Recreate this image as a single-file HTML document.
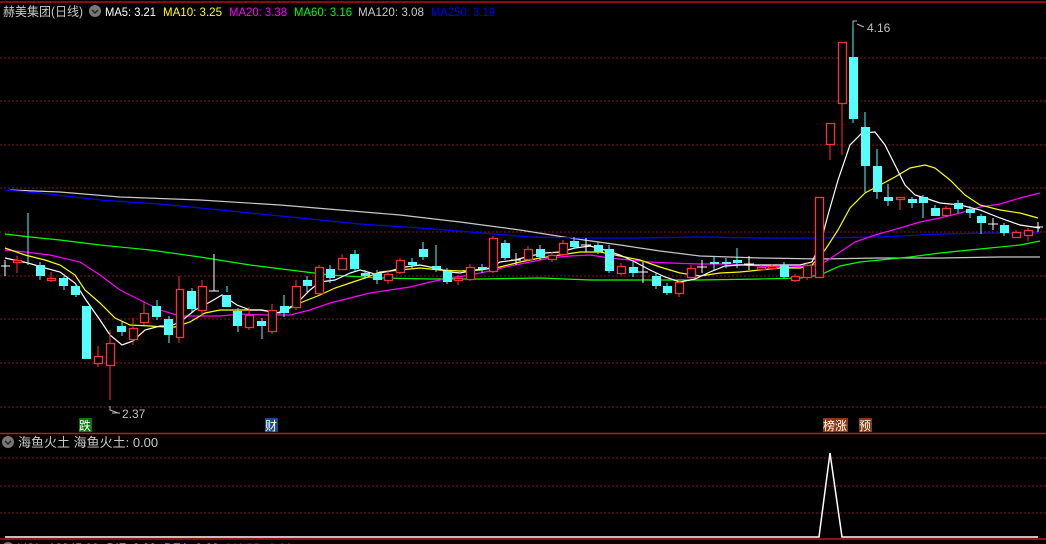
<!DOCTYPE html>
<html><head><meta charset="utf-8"><style>
html,body{margin:0;padding:0;background:#000;width:1046px;height:544px;overflow:hidden}
svg{display:block}
text{font-family:"Liberation Sans","Noto Sans CJK SC",sans-serif}
</style></head><body>
<svg width="1046" height="544" viewBox="0 0 1046 544" xmlns="http://www.w3.org/2000/svg">
<rect width="1046" height="544" fill="#000"/>
<line x1="0" y1="2" x2="1046" y2="2" stroke="#b01010" stroke-width="1.5"/>
<g stroke="#8a1818" stroke-width="1" stroke-dasharray="2,2">
<line x1="0" y1="58" x2="1046" y2="58"/><line x1="0" y1="101" x2="1046" y2="101"/>
<line x1="0" y1="145" x2="1046" y2="145"/><line x1="0" y1="188" x2="1046" y2="188"/>
<line x1="0" y1="232" x2="1046" y2="232"/><line x1="0" y1="276" x2="1046" y2="276"/>
<line x1="0" y1="319" x2="1046" y2="319"/><line x1="0" y1="363" x2="1046" y2="363"/>
<line x1="0" y1="407" x2="1046" y2="407"/>
<line x1="0" y1="458" x2="1046" y2="458"/><line x1="0" y1="486" x2="1046" y2="486"/>
<line x1="0" y1="513" x2="1046" y2="513"/>
</g>
<line x1="0" y1="433.5" x2="1046" y2="433.5" stroke="#c01818" stroke-width="1.5"/>
<line x1="0" y1="539" x2="1046" y2="539" stroke="#c01818" stroke-width="1.5"/>

<g fill="none" stroke-width="1.2">
<polyline stroke="#c8c8c8" points="10,190 60,192 120,197 200,200 280,205 340,210 400,215 460,222 520,230 570,238 620,245 660,251 700,256 760,258 820,259 880,258 940,258 1000,257 1040,257"/>
<polyline stroke="#0000ff" points="5,190 40,193 100,200 160,204 230,211 300,218 360,224 420,228 470,232 530,237 580,238 640,238 700,237 760,238 820,238 880,237 940,234 1000,233 1040,233"/>
<polyline stroke="#00ff00" points="5,234 30,237 60,240 100,245 150,250 200,257 250,265 290,270 330,275 380,278 430,279 480,279 540,278 590,280 640,280 700,280 760,279 800,278 820,275 840,266 860,262 880,260 910,257 940,253 980,249 1020,245 1040,241"/>
<polyline stroke="#ff00ff" points="5,250 25,252 50,255 80,262 100,275 120,290 140,300 160,310 180,316 200,316 220,316 240,314 265,315 290,315 310,310 330,303 350,298 370,293 390,290 410,287 430,282 450,278 470,275 490,271 510,266 530,262 550,258 570,256 590,255 610,258 630,260 650,262 670,263 700,264 730,264 760,266 790,267 810,266 825,262 840,252 855,242 875,235 900,228 920,222 940,218 960,213 980,207 1000,204 1020,198 1040,193"/>
<polyline stroke="#ffff00" points="5,248 25,255 45,260 60,265 75,275 85,290 100,303 115,318 130,325 150,326 165,327 175,327 190,322 205,313 220,310 240,310 260,310 280,313 290,307 300,303 320,295 335,288 350,283 365,278 380,272 400,270 420,268 440,270 460,271 480,270 500,267 520,262 540,258 560,255 580,252 600,252 620,256 640,260 660,267 680,273 700,276 720,273 740,272 760,270 780,268 800,268 812,265 825,250 838,230 850,208 865,193 880,185 895,177 910,168 925,165 935,168 950,180 965,195 980,205 1000,210 1020,213 1038,218"/>
<polyline stroke="#ffffff" points="5,258 28,263 45,268 60,272 75,283 86,300 100,320 110,335 122,345 133,341 145,330 160,326 170,326 180,322 195,310 210,302 222,295 237,305 250,310 262,310 277,313 290,308 300,300 310,290 320,282 335,280 350,273 360,270 375,274 390,271 405,267 420,265 435,268 450,272 460,273 475,270 490,268 500,262 515,260 530,256 545,253 560,252 575,248 590,246 605,250 620,255 635,262 650,270 665,277 680,282 695,279 710,272 725,266 740,265 760,265 780,265 800,265 812,262 820,245 828,215 838,180 850,145 862,133 875,132 885,145 895,165 905,185 915,195 925,198 940,203 960,205 980,210 1000,218 1020,225 1040,228"/>
</g>

<g stroke="#54ffff" stroke-width="1">
<line x1="28" y1="213" x2="28" y2="265"/><line x1="40" y1="262" x2="40" y2="280"/>
<line x1="64" y1="276" x2="64" y2="290"/><line x1="76" y1="284" x2="76" y2="297"/>
<line x1="122" y1="322" x2="122" y2="336"/><line x1="157" y1="300" x2="157" y2="320"/>
<line x1="169" y1="316" x2="169" y2="343"/><line x1="192" y1="288" x2="192" y2="312"/>
<line x1="227" y1="292" x2="227" y2="286"/><line x1="238" y1="308" x2="238" y2="332"/>
<line x1="262" y1="318" x2="262" y2="339"/><line x1="284" y1="295" x2="284" y2="317"/>
<line x1="307" y1="276" x2="307" y2="292"/><line x1="330" y1="265" x2="330" y2="283"/>
<line x1="355" y1="250" x2="355" y2="271"/><line x1="365" y1="270" x2="365" y2="279"/>
<line x1="377" y1="270" x2="377" y2="284"/><line x1="412" y1="258" x2="412" y2="268"/>
<line x1="423" y1="242" x2="423" y2="260"/><line x1="436" y1="245" x2="436" y2="272"/>
<line x1="447" y1="268" x2="447" y2="284"/><line x1="482" y1="264" x2="482" y2="273"/>
<line x1="505" y1="240" x2="505" y2="260"/><line x1="540" y1="245" x2="540" y2="260"/>
<line x1="574" y1="237" x2="574" y2="249"/><line x1="598" y1="242" x2="598" y2="254"/>
<line x1="609" y1="245" x2="609" y2="273"/><line x1="633" y1="262" x2="633" y2="277"/>
<line x1="656" y1="273" x2="656" y2="289"/><line x1="667" y1="283" x2="667" y2="295"/>
<line x1="714" y1="256" x2="714" y2="270"/><line x1="726" y1="258" x2="726" y2="268"/>
<line x1="737" y1="248" x2="737" y2="268"/><line x1="784" y1="262" x2="784" y2="279"/>
<line x1="853" y1="22" x2="853" y2="123"/><line x1="865" y1="112" x2="865" y2="192"/>
<line x1="877" y1="149" x2="877" y2="199"/><line x1="888" y1="184" x2="888" y2="206"/>
<line x1="912" y1="197" x2="912" y2="208"/><line x1="923" y1="195" x2="923" y2="218"/>
<line x1="935" y1="205" x2="935" y2="216"/><line x1="958" y1="200" x2="958" y2="213"/>
<line x1="970" y1="206" x2="970" y2="218"/><line x1="981" y1="214" x2="981" y2="234"/>
<line x1="1004" y1="223" x2="1004" y2="236"/>
</g>
<g fill="#54ffff">
<rect x="36" y="265" width="9" height="11"/><rect x="59" y="278" width="9" height="8"/>
<rect x="71" y="286" width="9" height="9"/><rect x="82" y="306" width="9" height="53"/>
<rect x="117" y="326" width="9" height="6"/><rect x="152" y="306" width="9" height="11"/>
<rect x="164" y="319" width="9" height="16"/><rect x="187" y="291" width="9" height="18"/>
<rect x="222" y="295" width="9" height="12"/><rect x="233" y="311" width="9" height="15"/>
<rect x="257" y="321" width="9" height="5"/><rect x="280" y="306" width="9" height="7"/>
<rect x="303" y="280" width="9" height="6"/><rect x="326" y="269" width="9" height="9"/>
<rect x="350" y="254" width="9" height="15"/><rect x="361" y="273" width="9" height="3"/>
<rect x="373" y="273" width="9" height="7"/><rect x="408" y="262" width="9" height="3"/>
<rect x="419" y="249" width="9" height="8"/><rect x="432" y="266" width="9" height="3"/>
<rect x="443" y="271" width="9" height="11"/><rect x="478" y="267" width="9" height="2"/>
<rect x="501" y="243" width="9" height="15"/><rect x="536" y="249" width="9" height="8"/>
<rect x="570" y="241" width="9" height="6"/><rect x="594" y="245" width="9" height="7"/>
<rect x="605" y="249" width="9" height="22"/><rect x="629" y="267" width="9" height="6"/>
<rect x="652" y="276" width="9" height="10"/><rect x="663" y="286" width="9" height="7"/>
<rect x="710" y="262" width="9" height="2"/><rect x="722" y="262" width="9" height="2"/>
<rect x="733" y="260" width="9" height="3"/><rect x="780" y="265" width="9" height="12"/>
<rect x="849" y="57" width="9" height="62"/><rect x="861" y="127" width="9" height="39"/>
<rect x="873" y="166" width="9" height="26"/><rect x="884" y="197" width="9" height="4"/>
<rect x="908" y="199" width="9" height="4"/><rect x="919" y="197" width="9" height="6"/>
<rect x="931" y="208" width="9" height="8"/><rect x="954" y="203" width="9" height="6"/>
<rect x="966" y="209" width="9" height="4"/><rect x="977" y="216" width="9" height="7"/>
<rect x="1000" y="225" width="9" height="8"/>
</g>
<g stroke="#ff3232" stroke-width="1">
<line x1="17" y1="256" x2="17" y2="273"/><line x1="51" y1="272" x2="51" y2="282"/>
<line x1="98" y1="346" x2="98" y2="367"/><line x1="110" y1="330" x2="110" y2="400"/>
<line x1="133" y1="318" x2="133" y2="345"/><line x1="144" y1="302" x2="144" y2="325"/>
<line x1="179" y1="276" x2="179" y2="343"/><line x1="202" y1="280" x2="202" y2="316"/>
<line x1="249" y1="307" x2="249" y2="330"/><line x1="272" y1="304" x2="272" y2="334"/>
<line x1="296" y1="280" x2="296" y2="310"/><line x1="319" y1="265" x2="319" y2="295"/>
<line x1="342" y1="254" x2="342" y2="270"/><line x1="388" y1="270" x2="388" y2="284"/>
<line x1="400" y1="258" x2="400" y2="274"/><line x1="458" y1="275" x2="458" y2="285"/>
<line x1="470" y1="264" x2="470" y2="281"/><line x1="493" y1="236" x2="493" y2="273"/>
<line x1="528" y1="246" x2="528" y2="261"/><line x1="552" y1="252" x2="552" y2="262"/>
<line x1="563" y1="240" x2="563" y2="256"/><line x1="621" y1="263" x2="621" y2="275"/>
<line x1="679" y1="279" x2="679" y2="297"/><line x1="691" y1="265" x2="691" y2="279"/>
<line x1="761" y1="265" x2="761" y2="271"/><line x1="772" y1="264" x2="772" y2="270"/>
<line x1="795" y1="274" x2="795" y2="282"/><line x1="807" y1="262" x2="807" y2="280"/>
<line x1="830" y1="123" x2="830" y2="160"/><line x1="842" y1="42" x2="842" y2="155"/>
<line x1="900" y1="197" x2="900" y2="210"/><line x1="946" y1="206" x2="946" y2="217"/>
<line x1="1016" y1="230" x2="1016" y2="238"/><line x1="1028" y1="228" x2="1028" y2="241"/>
</g>
<g fill="#000" stroke="#ff3232" stroke-width="1.3">
<rect x="13.5" y="260.5" width="8" height="2"/><rect x="47.5" y="278.5" width="8" height="2"/>
<rect x="94.5" y="356.5" width="8" height="7"/><rect x="106.5" y="343.5" width="8" height="22"/>
<rect x="129.5" y="328.5" width="8" height="11"/><rect x="140.5" y="313.5" width="8" height="9"/>
<rect x="176.5" y="289.5" width="7" height="48"/><rect x="198.5" y="286.5" width="8" height="24"/>
<rect x="245.5" y="315.5" width="8" height="12"/><rect x="268.5" y="310.5" width="8" height="21"/>
<rect x="292.5" y="286.5" width="8" height="21"/><rect x="315.5" y="267.5" width="8" height="26"/>
<rect x="338.5" y="258.5" width="8" height="11"/><rect x="384.5" y="274.5" width="8" height="6"/>
<rect x="396.5" y="260.5" width="8" height="12"/><rect x="454.5" y="278.5" width="8" height="2"/>
<rect x="466.5" y="267.5" width="8" height="12"/><rect x="489.5" y="238.5" width="8" height="33"/>
<rect x="524.5" y="249.5" width="8" height="10"/><rect x="548.5" y="255.5" width="8" height="4"/>
<rect x="559.5" y="243.5" width="8" height="11"/><rect x="617.5" y="266.5" width="8" height="7"/>
<rect x="675.5" y="282.5" width="8" height="11"/><rect x="687.5" y="268.5" width="8" height="9"/>
<rect x="757.5" y="267.5" width="8" height="2"/><rect x="768.5" y="266.5" width="8" height="2"/>
<rect x="791.5" y="276.5" width="8" height="4"/><rect x="803.5" y="265.5" width="8" height="12"/>
<rect x="815.5" y="197.5" width="8" height="80"/><rect x="826.5" y="123.5" width="8" height="21"/>
<rect x="838.5" y="42.5" width="8" height="61"/><rect x="896.5" y="197.5" width="8" height="2"/>
<rect x="942.5" y="208.5" width="8" height="7"/><rect x="1012.5" y="232.5" width="8" height="5"/>
<rect x="1024.5" y="230.5" width="8" height="5"/>
</g>
<g stroke="#ffffff" stroke-width="1">
<line x1="5" y1="260" x2="5" y2="276"/><line x1="1" y1="266" x2="10" y2="266"/>
<line x1="214" y1="254" x2="214" y2="291"/><line x1="209" y1="291" x2="219" y2="291"/>
<line x1="516" y1="253" x2="516" y2="265"/><line x1="511" y1="260" x2="521" y2="260"/>
<line x1="586" y1="238" x2="586" y2="252"/><line x1="581" y1="245" x2="591" y2="245"/>
<line x1="643" y1="262" x2="643" y2="283"/><line x1="638" y1="272" x2="648" y2="272"/>
<line x1="702" y1="260" x2="702" y2="273"/><line x1="697" y1="267" x2="707" y2="267"/>
<line x1="749" y1="256" x2="749" y2="270"/><line x1="744" y1="264" x2="754" y2="264"/>
<line x1="993" y1="218" x2="993" y2="230"/><line x1="988" y1="224" x2="998" y2="224"/>
<line x1="1038" y1="222" x2="1038" y2="232"/><line x1="1033" y1="227" x2="1043" y2="227"/>
</g>
<g stroke="#bbbbbb" stroke-width="1" fill="none">
<polyline points="853,26 853,21 857,21"/><line x1="857" y1="24" x2="864" y2="27"/>
<polyline points="110,406 110,410 118,413"/><line x1="112" y1="413" x2="120" y2="413"/>
</g>
<text x="867" y="32" fill="#c0c0c0" font-size="12">4.16</text>
<text x="122" y="418" fill="#c0c0c0" font-size="12">2.37</text>

<rect x="79" y="418" width="13" height="14" fill="#0a7a0a"/>
<text x="79" y="430" fill="#fff" font-size="12">跌</text>
<rect x="265" y="418" width="13" height="14" fill="#1a4a88"/>
<text x="265" y="430" fill="#fff" font-size="12">财</text>
<rect x="823" y="418" width="25" height="14" fill="#8a3a10"/>
<text x="823" y="430" fill="#fff" font-size="12">榜涨</text>
<rect x="859" y="418" width="13" height="14" fill="#8a3a10"/>
<text x="859" y="430" fill="#fff" font-size="12">预</text>

<text x="3" y="16" fill="#c8c8c8" font-size="12.5" textLength="80" lengthAdjust="spacingAndGlyphs">赫美集团(日线)</text>
<circle cx="95" cy="11" r="6" fill="#777"/>
<polyline points="92,10 95,13 98,10" stroke="#222" stroke-width="1.5" fill="none"/>
<g font-size="12">
<text x="105" y="16" fill="#ffffff" textLength="51" lengthAdjust="spacingAndGlyphs">MA5: 3.21</text>
<text x="163" y="16" fill="#ffff00" textLength="59" lengthAdjust="spacingAndGlyphs">MA10: 3.25</text>
<text x="229" y="16" fill="#ff00ff" textLength="58" lengthAdjust="spacingAndGlyphs">MA20: 3.38</text>
<text x="294" y="16" fill="#00ff00" textLength="58" lengthAdjust="spacingAndGlyphs">MA60: 3.16</text>
<text x="358" y="16" fill="#c8c8c8" textLength="66" lengthAdjust="spacingAndGlyphs">MA120: 3.08</text>
<text x="431" y="16" fill="#0000ff" textLength="64" lengthAdjust="spacingAndGlyphs">MA250: 3.19</text>
</g>

<circle cx="8" cy="442" r="6" fill="#777"/>
<polyline points="5,441 8,444 11,441" stroke="#222" stroke-width="1.5" fill="none"/>
<text x="18" y="447" fill="#c8c8c8" font-size="13">海鱼火土  海鱼火土: 0.00</text>
<polyline points="5,537 819,537 830,453 842,537 1038,537" stroke="#ffffff" stroke-width="1.5" fill="none"/>
<circle cx="8" cy="548" r="6" fill="#777"/>
<text x="18" y="552" font-size="12"><tspan fill="#c8c8c8">VOL: 12345.00</tspan><tspan fill="#ffffff" dx="8">DIF: 0.00</tspan><tspan fill="#ffff00" dx="8">DEA: 0.00</tspan><tspan fill="#ff00ff" dx="8">MACD: 0.00</tspan></text>
</svg>
</body></html>
